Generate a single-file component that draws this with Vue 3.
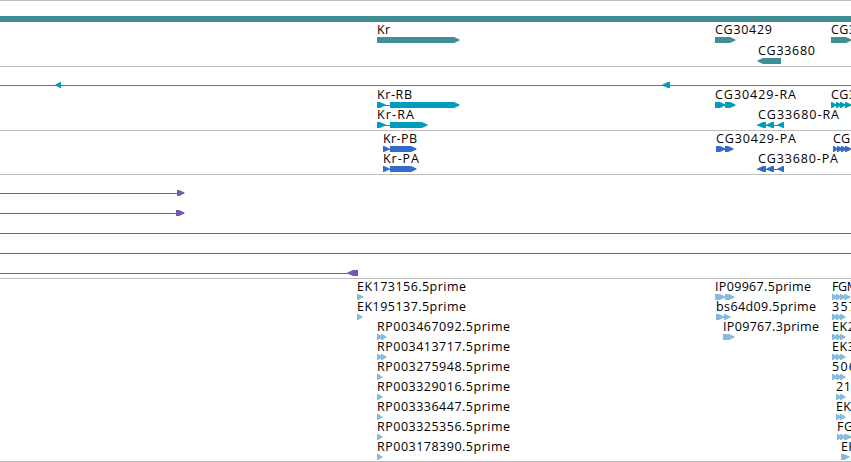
<template>
  <div class="browser">
    <svg
      v-for="track in tracks"
      :key="track.name"
      :class="['track', track.name]"
      :height="track.height"
      width="851"
    >
      <rect class="separator" x="0" y="0" width="851" height="1" />
      <rect v-for="(bar, i) in track.bars" :key="'b' + i" x="0" :y="bar.y" :width="bar.to" :height="bar.h" />
      <g v-for="(f, i) in track.features" :key="i">
        <text v-if="f.label" :x="f.x" :y="f.y - 3" :textLength="f.w" lengthAdjust="spacing">{{ f.label }}</text>
        <rect v-if="f.parts.length > 1" :x="f.parts[0][0]" :y="f.y + 3" :width="spanOf(f)" height="1" />
        <polygon v-for="(p, j) in f.parts" :key="j" :points="arrow(p[0], p[1], f.y, f.reverse)" />
      </g>
    </svg>
    <div class="end"></div>
  </div>
</template>

<script setup>
  import {ref} from "vue"

  // label, label width, label x, top of the glyph, exons
  const feature = (label, w, x, y, parts, reverse = false) => ({ label, w, x, y, parts, reverse })

  const tracks = ref([
    {
      name: "genes",
      height: 66,
      bars: [{ y: 16, to: 851, h: 6 }],
      features: [
        feature("Kr", 13, 377, 37, [[377, 460]]),
        feature("CG30429", 57, 715, 37, [[715, 736]]),
        feature("CG3", 25, 831, 37, [[831, 852]]),
        feature("CG33680", 57, 758, 58, [[757, 781]], true)
      ]
    },
    {
      name: "transcripts",
      height: 64,
      bars: [{ y: 19, to: 851, h: 1 }],
      features: [
        feature("", 0, 0, 16, [[55, 61]], true),
        feature("", 0, 0, 16, [[662, 670]], true),
        feature("Kr-RB", 35, 377, 36, [[377, 386], [390, 460]]),
        feature("Kr-RA", 37, 377, 56, [[377, 386], [390, 428]]),
        feature("CG30429-RA", 81, 715, 36, [[715, 726], [725, 736]]),
        feature("CG33680-RA", 81, 758, 56, [[757, 766], [766, 774], [777, 784]], true),
        feature("CG3", 25, 831, 36, [[831, 837], [836, 842], [840, 846], [845, 852]])
      ]
    },
    {
      name: "proteins",
      height: 44,
      features: [
        feature("Kr-PB", 34, 383, 16, [[383, 390], [390, 417]]),
        feature("Kr-PA", 36, 383, 36, [[383, 390], [390, 417]]),
        feature("CG30429-PA", 80, 716, 16, [[716, 726], [725, 734]]),
        feature("CG33680-PA", 80, 758, 36, [[757, 766], [766, 774], [777, 784]], true),
        feature("CG", 17, 833, 16, [[833, 838], [837, 843], [841, 847], [845, 852]])
      ]
    },
    {
      name: "insertions",
      height: 104,
      bars: [
        { y: 19, to: 178, h: 1 },
        { y: 39, to: 178, h: 1 },
        { y: 59, to: 851, h: 1 },
        { y: 79, to: 851, h: 1 },
        { y: 99, to: 350, h: 1 }
      ],
      features: [
        feature("", 0, 0, 16, [[177, 185]]),
        feature("", 0, 0, 36, [[176, 185]]),
        feature("", 0, 0, 96, [[347, 358]], true)
      ]
    },
    {
      name: "ests",
      height: 183,
      features: [
        feature("EK173156.5prime", 109, 357, 16, [[357, 364]]),
        feature("EK195137.5prime", 109, 357, 36, [[357, 363]]),
        feature("RP003467092.5prime", 133, 377, 56, [[377, 383], [381, 387]]),
        feature("RP003413717.5prime", 133, 377, 76, [[377, 383], [381, 387]]),
        feature("RP003275948.5prime", 133, 377, 96, [[377, 383]]),
        feature("RP003329016.5prime", 133, 377, 116, [[377, 383]]),
        feature("RP003336447.5prime", 133, 377, 136, [[377, 383]]),
        feature("RP003325356.5prime", 133, 377, 156, [[377, 383]]),
        feature("RP003178390.5prime", 133, 377, 176, [[377, 383]]),
        feature("IP09967.5prime", 96, 715, 16, [[715, 726], [725, 735]]),
        feature("bs64d09.5prime", 100, 716, 36, [[716, 725], [724, 731]]),
        feature("IP09767.3prime", 96, 723, 56, [[723, 735]]),
        feature("FGM", 26, 832, 16, [[832, 838], [836, 842], [840, 846], [844, 851]]),
        feature("357", 24, 832, 36, [[832, 838], [836, 842], [840, 846]]),
        feature("EK2", 23, 832, 56, [[832, 838], [836, 842], [840, 846]]),
        feature("EK3", 23, 832, 76, [[832, 838], [836, 842], [840, 846]]),
        feature("506", 24, 832, 96, [[832, 838], [836, 842], [840, 846]]),
        feature("21", 15, 836, 116, [[836, 842], [840, 846]]),
        feature("EK", 15, 836, 136, [[836, 842], [840, 846]]),
        feature("FG", 16, 837, 156, [[837, 842], [840, 846], [844, 852]]),
        feature("EK", 15, 841, 176, [[841, 850]])
      ]
    }
  ])

  const spanOf = (f) => f.parts[f.parts.length - 1][1] - f.parts[0][0] - 3

  // block with a blunt head, short ones are nearly all head
  const arrow = (x1, x2, y, reverse) => {
    const head = Math.min(6, x2 - x1 - 1)
    if (reverse) {
      return `${x2},${y} ${x1 + head},${y} ${x1 + 0.5},${y + 2.5} ${x1 + 0.5},${y + 3.5} ${x1 + head},${y + 6} ${x2},${y + 6}`
    }
    return `${x1},${y} ${x2 - head},${y} ${x2 - 0.5},${y + 2.5} ${x2 - 0.5},${y + 3.5} ${x2 - head},${y + 6} ${x1},${y + 6}`
  }
</script>

<style>
  body{
    margin: 0;
    background: #fff;
  }
</style>

<style scoped>
  .browser{
    display: flex;
    flex-direction: column;
    width: 851px;
    height: 462px;
    overflow: hidden;
    background: #fff;
  }

  .track{
    display: block;
    flex: none;
    overflow: hidden;
  }

  .track .separator, .end{
    fill: #bebebe;
    background: #bebebe;
  }

  .end{
    height: 1px;
  }

  text{
    font-family: "Open Sans", "Noto Sans", sans-serif;
    font-size: 12.5px;
    font-weight: 400;
    fill: #000;
  }

  .genes{
    fill: #3f8f94;
  }

  .transcripts{
    fill: #009cbc;
  }

  .proteins{
    fill: #336acc;
  }

  .insertions{
    fill: #7858aa;
  }

  .ests{
    fill: #87bbdd;
  }
</style>
